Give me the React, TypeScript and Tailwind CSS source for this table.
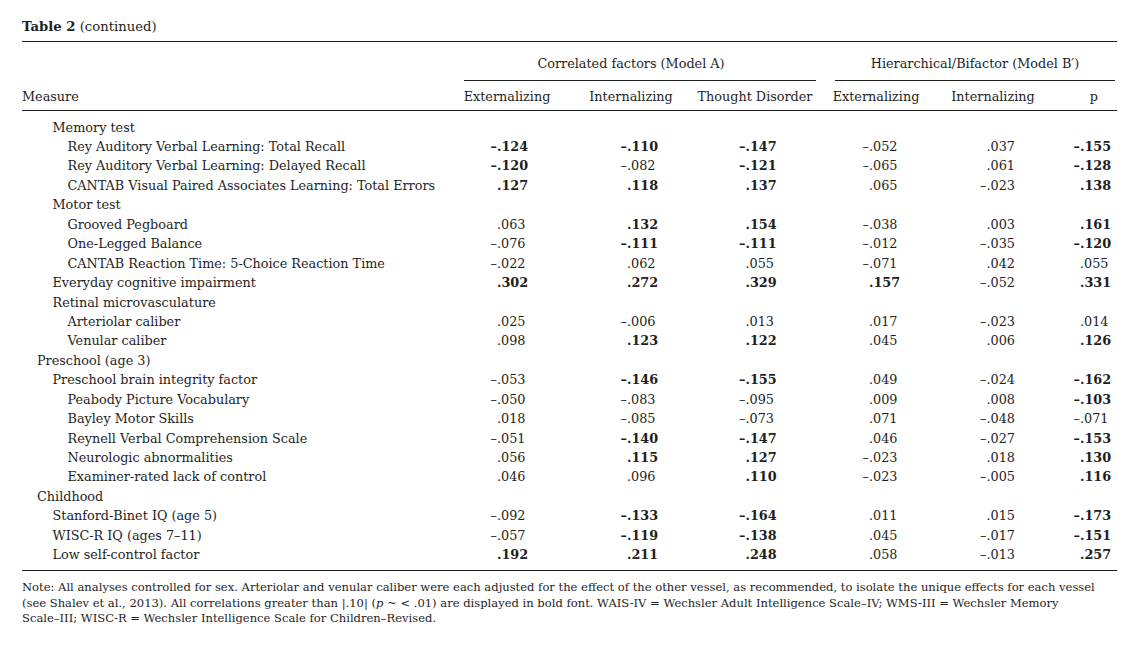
import React from 'react';

type Cell = { v: string; b?: boolean };

interface Row {
  label: string;
  level: 1 | 2 | 3;
  vals?: Cell[];
}

const c = (v: string, b = false): Cell => ({ v, b });

const rows: Row[] = [
  { label: 'Memory test', level: 2 },
  { label: 'Rey Auditory Verbal Learning: Total Recall', level: 3, vals: [c('–.124', true), c('–.110', true), c('–.147', true), c('–.052'), c('.037'), c('–.155', true)] },
  { label: 'Rey Auditory Verbal Learning: Delayed Recall', level: 3, vals: [c('–.120', true), c('–.082'), c('–.121', true), c('–.065'), c('.061'), c('–.128', true)] },
  { label: 'CANTAB Visual Paired Associates Learning: Total Errors', level: 3, vals: [c('.127', true), c('.118', true), c('.137', true), c('.065'), c('–.023'), c('.138', true)] },
  { label: 'Motor test', level: 2 },
  { label: 'Grooved Pegboard', level: 3, vals: [c('.063'), c('.132', true), c('.154', true), c('–.038'), c('.003'), c('.161', true)] },
  { label: 'One-Legged Balance', level: 3, vals: [c('–.076'), c('–.111', true), c('–.111', true), c('–.012'), c('–.035'), c('–.120', true)] },
  { label: 'CANTAB Reaction Time: 5-Choice Reaction Time', level: 3, vals: [c('–.022'), c('.062'), c('.055'), c('–.071'), c('.042'), c('.055')] },
  { label: 'Everyday cognitive impairment', level: 2, vals: [c('.302', true), c('.272', true), c('.329', true), c('.157', true), c('–.052'), c('.331', true)] },
  { label: 'Retinal microvasculature', level: 2 },
  { label: 'Arteriolar caliber', level: 3, vals: [c('.025'), c('–.006'), c('.013'), c('.017'), c('–.023'), c('.014')] },
  { label: 'Venular caliber', level: 3, vals: [c('.098'), c('.123', true), c('.122', true), c('.045'), c('.006'), c('.126', true)] },
  { label: 'Preschool (age 3)', level: 1 },
  { label: 'Preschool brain integrity factor', level: 2, vals: [c('–.053'), c('–.146', true), c('–.155', true), c('.049'), c('–.024'), c('–.162', true)] },
  { label: 'Peabody Picture Vocabulary', level: 3, vals: [c('–.050'), c('–.083'), c('–.095'), c('.009'), c('.008'), c('–.103', true)] },
  { label: 'Bayley Motor Skills', level: 3, vals: [c('.018'), c('–.085'), c('–.073'), c('.071'), c('–.048'), c('–.071')] },
  { label: 'Reynell Verbal Comprehension Scale', level: 3, vals: [c('–.051'), c('–.140', true), c('–.147', true), c('.046'), c('–.027'), c('–.153', true)] },
  { label: 'Neurologic abnormalities', level: 3, vals: [c('.056'), c('.115', true), c('.127', true), c('–.023'), c('.018'), c('.130', true)] },
  { label: 'Examiner-rated lack of control', level: 3, vals: [c('.046'), c('.096'), c('.110', true), c('–.023'), c('–.005'), c('.116', true)] },
  { label: 'Childhood', level: 1 },
  { label: 'Stanford-Binet IQ (age 5)', level: 2, vals: [c('–.092'), c('–.133', true), c('–.164', true), c('.011'), c('.015'), c('–.173', true)] },
  { label: 'WISC-R IQ (ages 7–11)', level: 2, vals: [c('–.057'), c('–.119', true), c('–.138', true), c('.045'), c('–.017'), c('–.151', true)] },
  { label: 'Low self-control factor', level: 2, vals: [c('.192', true), c('.211', true), c('.248', true), c('.058'), c('–.013'), c('.257', true)] },
];

// width of the box left of the decimal point, per column
const signBox = ['w-[35px]', 'w-[75px]', 'w-[35.5px]', 'w-[69px]', 'w-[34.5px]', 'w-[46px]'];

const indent = { 1: 'pl-[15px]', 2: 'pl-[30.5px]', 3: 'pl-[45.5px]' };

const cols = 'grid grid-cols-[440px_90px_158px_90px_152px_82px_83px]';

function Num({ cell, col }: { cell: Cell; col: number }) {
  const neg = cell.v.startsWith('–');
  const frac = neg ? cell.v.slice(1) : cell.v;
  return (
    <div className={`flex whitespace-nowrap ${cell.b ? 'font-bold' : ''}`}>
      <span className={`${signBox[col]} shrink-0 text-right`}>{neg ? '–' : ''}</span>
      <span>{frac}</span>
    </div>
  );
}

export default function App() {
  return (
    <div className="w-[1139px] h-[651px] bg-white px-[22px] text-[#1e1e1e] font-['DejaVu_Serif',serif] text-[12.8px]">
      <div className="h-[41px] pt-[17px] leading-[20px] whitespace-nowrap text-[13.2px]">
        <span className="font-bold">Table 2</span> (continued)
      </div>

      <div className="border-t border-[#1e1e1e]">
        {/* spanner headings */}
        <div className={`${cols} pt-[12px]`}>
          <div />
          <div className="col-span-3">
            <div className="h-[20px] leading-[20px] text-center whitespace-nowrap">Correlated factors (Model A)</div>
            <div className="mt-[6px] ml-[2px] mr-[-16px] border-b border-[#1e1e1e]" />
          </div>
          <div className="col-span-3 ml-[35px] mr-[2px]">
            <div className="h-[20px] leading-[20px] text-center whitespace-nowrap">Hierarchical/Bifactor (Model B′)</div>
            <div className="mt-[6px] border-b border-[#1e1e1e]" />
          </div>
        </div>

        {/* column headings */}
        <div className={`${cols} pt-[6px] pb-[3px] border-b border-[#1e1e1e] leading-[20px] whitespace-nowrap`}>
          <div>Measure</div>
          <div className="flex justify-center">Externalizing</div>
          <div className="flex justify-center">Internalizing</div>
          <div className="flex justify-center">Thought Disorder</div>
          <div className="flex justify-center">Externalizing</div>
          <div className="flex justify-center">Internalizing</div>
          <div className="flex justify-end pr-[19px]">p</div>
        </div>

        {/* body */}
        <div className="pt-[6.6px] pb-[5px] border-b border-[#1e1e1e]">
          {rows.map((row, i) => (
            <div key={i} className={`${cols} h-[19.45px] leading-[19.45px]`}>
              <div className={`${indent[row.level]} whitespace-nowrap`}>{row.label}</div>
              {row.vals?.map((cell, j) => (
                <Num key={j} cell={cell} col={j} />
              ))}
            </div>
          ))}
        </div>
      </div>

      <div className="mt-[9.5px] text-[11.55px] leading-[15.6px] whitespace-nowrap">
        Note: All analyses controlled for sex. Arteriolar and venular caliber were each adjusted for the effect of the other vessel, as recommended, to isolate the unique effects for each vessel
        <br />
        (see Shalev et al., 2013). All correlations greater than |.10| (<i>p</i> ~ &lt; .01) are displayed in bold font. WAIS-IV = Wechsler Adult Intelligence Scale–IV; WMS-III = Wechsler Memory
        <br />
        Scale–III; WISC-R = Wechsler Intelligence Scale for Children–Revised.
      </div>
    </div>
  );
}
